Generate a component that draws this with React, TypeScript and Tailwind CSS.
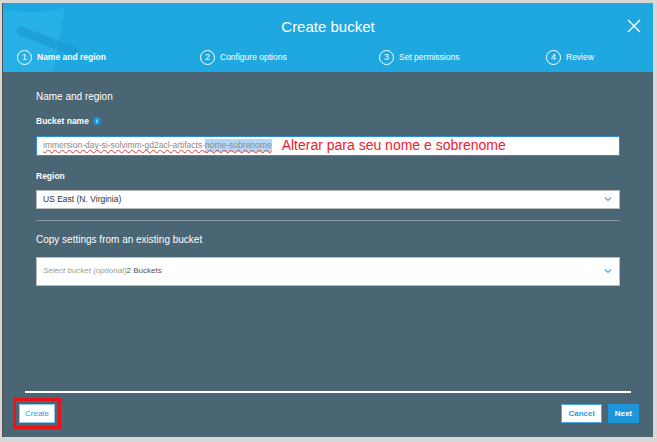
import React from "react";

const Step = ({ n, label, active }: { n: number; label: string; active?: boolean }) => (
  <div className="flex items-center gap-[5px]">
    <div className="w-[15px] h-[15px] rounded-full border border-white flex items-center justify-center text-[9px] leading-none">
      {n}
    </div>
    <span className={active ? "font-bold text-[8.5px]" : "text-[8.5px]"}>{label}</span>
  </div>
);

const Chevron = () => (
  <svg width="8" height="6" viewBox="0 0 8 6" className="shrink-0">
    <path d="M1 1.5 L4 4.5 L7 1.5" fill="none" stroke="#4aa8e0" strokeWidth="1.2" />
  </svg>
);

export default function App() {
  return (
    <div
      className="w-[657px] h-[442px] bg-[#d8d8d8] pt-[3px] pl-[2px] pr-[4px] pb-[5px] flex"
      style={{ fontFamily: "'Liberation Sans', Arial, sans-serif" }}
    >
      <div className="flex-1 flex flex-col bg-[#4a6574] border-l border-[#555]">
        {/* header */}
        <div className="relative h-[69px] bg-[#1fa8df] text-white overflow-hidden">
          <svg className="absolute left-0 top-0" width="80" height="69" viewBox="0 0 80 69">
            <path d="M-10 4 Q30 14 62 4 L50 69 L-10 69 Z" fill="#2bb4e8" opacity="0.7" />
            <path d="M18 28 L70 48" stroke="#1a96cc" strokeWidth="9" strokeLinecap="round" fill="none" opacity="0.55" />
          </svg>
          <div className="absolute left-0 right-0 top-[13px] text-center text-[15px]">Create bucket</div>
          <svg className="absolute right-[12px] top-[16px]" width="14" height="14" viewBox="0 0 14 14">
            <path d="M1 1 L13 13 M13 1 L1 13" stroke="white" strokeWidth="1.4" />
          </svg>
          <div className="absolute left-[14px] top-[47px] w-[560px]">
            <div className="absolute left-0"><Step n={1} label="Name and region" active /></div>
            <div className="absolute left-[183px]"><Step n={2} label="Configure options" /></div>
            <div className="absolute left-[362px]"><Step n={3} label="Set permissions" /></div>
            <div className="absolute left-[529px]"><Step n={4} label="Review" /></div>
          </div>
        </div>

        {/* body */}
        <div className="flex-1 flex flex-col px-[33px] pt-[17px] text-white">
          <div className="text-[10px]">Name and region</div>
          <div className="mt-[11px] flex items-center gap-[4px] text-[8.5px] font-bold">
            Bucket name
            <span className="w-[8px] h-[8px] rounded-full bg-[#1e8fd6] inline-flex items-center justify-center text-[6px] leading-none text-white">
              i
            </span>
          </div>
          <div className="mt-[8px] h-[20px] bg-white border border-[#2a8ed0] flex items-center pl-[6px] text-[8.5px]">
            <span className="text-[#8a8a8a] underline decoration-wavy decoration-[#e03a3a] decoration-[0.5px]">
              immersion-day-si-solvimm-gd2acl-artifacts-
            </span>
            <span className="text-[#8a8a8a] bg-[#b5d5f5] underline decoration-wavy decoration-[#e03a3a] decoration-[0.5px]">
              nome-sobrenome
            </span>
            <span className="ml-[10px] text-[#ee1c2e] text-[14px]">Alterar para seu nome e sobrenome</span>
          </div>
          <div className="mt-[14px] text-[8.5px] font-bold">Region</div>
          <div className="mt-[7px] h-[19px] bg-white border border-[#bbb] flex items-center justify-between pl-[6px] pr-[7px] text-[8.5px] text-[#333]">
            <span>US East (N. Virginia)</span>
            <Chevron />
          </div>
          <div className="mt-[11px] h-px bg-[#8899a3]" />
          <div className="mt-[11px] text-[10px]">Copy settings from an existing bucket</div>
          <div className="mt-[10px] h-[29px] bg-white border border-[#bbb] flex items-center justify-between pl-[6px] pr-[7px] text-[8px]">
            <span>
              <span className="italic text-[#999]">Select bucket (optional)</span>
              <span className="text-[#555]">2 Buckets</span>
            </span>
            <Chevron />
          </div>
          <div className="flex-1" />
        </div>

        {/* footer */}
        <div className="px-[21px]">
          <div className="h-[2px] bg-white ml-[1px] mr-[1px]" />
        </div>
        <div className="h-[44px] flex items-start justify-between pl-[10px] pr-[14px] pt-[5px]">
          <div className="border-[3px] border-[#e8141a] p-[3px]">
            <div className="h-[19px] px-[5px] bg-white border border-[#8fc8ee] text-[#2b9ad8] text-[8px] flex items-center">
              Create
            </div>
          </div>
          <div className="flex gap-[6px] mt-[6px]">
            <div className="h-[19px] px-[6px] bg-white border border-[#4aa8e0] text-[#2b9ad8] text-[8px] font-bold flex items-center">
              Cancel
            </div>
            <div className="h-[19px] px-[7px] bg-[#1f96d9] text-white text-[8px] font-bold flex items-center">Next</div>
          </div>
        </div>
      </div>
    </div>
  );
}
